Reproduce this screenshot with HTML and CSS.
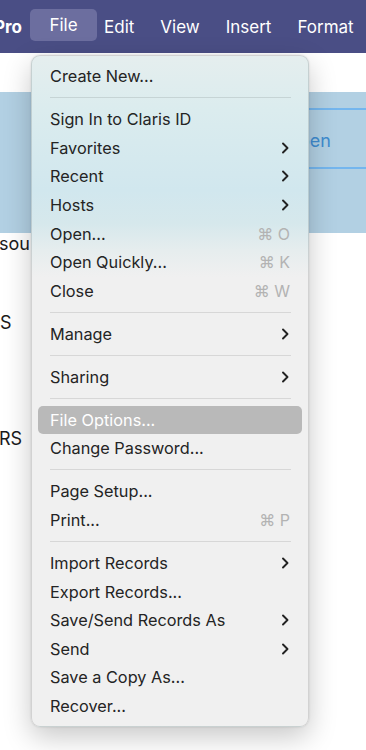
FILE: index.html
```html
<!DOCTYPE html>
<html>
<head>
<meta charset="utf-8">
<link rel="stylesheet" href="styles.css">
</head>
<body>
<div class="menubar">
  <span class="mb-item app"><span>Pro</span></span>
  <span class="mb-item active">File</span>
  <span class="mb-item edit">Edit</span>
  <span class="mb-item">View</span>
  <span class="mb-item">Insert</span>
  <span class="mb-item">Format</span>
</div>
<div class="page">
  <div class="strip"></div>
  <div class="band">
    <div class="field"><span class="btn-text">Open</span></div>
  </div>
  <div class="doc">
    <div class="doc-line l1">sou</div>
    <div class="doc-line l2">S</div>
    <div class="doc-line l3">RS</div>
  </div>
</div>

<div class="menu">
  <div class="item"><span>Create New...</span></div>
  <div class="sep"></div>
  <div class="item"><span>Sign In to Claris ID</span></div>
  <div class="item"><span>Favorites</span><svg class="chev" viewBox="0 0 8 12"><path d="M2 1.5 L6.5 6 L2 10.5"/></svg></div>
  <div class="item"><span>Recent</span><svg class="chev" viewBox="0 0 8 12"><path d="M2 1.5 L6.5 6 L2 10.5"/></svg></div>
  <div class="item"><span>Hosts</span><svg class="chev" viewBox="0 0 8 12"><path d="M2 1.5 L6.5 6 L2 10.5"/></svg></div>
  <div class="item"><span>Open...</span><span class="key">⌘ O</span></div>
  <div class="item"><span>Open Quickly...</span><span class="key">⌘ K</span></div>
  <div class="item"><span>Close</span><span class="key">⌘ W</span></div>
  <div class="sep"></div>
  <div class="item"><span>Manage</span><svg class="chev" viewBox="0 0 8 12"><path d="M2 1.5 L6.5 6 L2 10.5"/></svg></div>
  <div class="sep"></div>
  <div class="item"><span>Sharing</span><svg class="chev" viewBox="0 0 8 12"><path d="M2 1.5 L6.5 6 L2 10.5"/></svg></div>
  <div class="sep"></div>
  <div class="item selected"><span>File Options...</span></div>
  <div class="item"><span>Change Password...</span></div>
  <div class="sep"></div>
  <div class="item"><span>Page Setup...</span></div>
  <div class="item"><span>Print...</span><span class="key">⌘ P</span></div>
  <div class="sep"></div>
  <div class="item"><span>Import Records</span><svg class="chev" viewBox="0 0 8 12"><path d="M2 1.5 L6.5 6 L2 10.5"/></svg></div>
  <div class="item"><span>Export Records...</span></div>
  <div class="item"><span>Save/Send Records As</span><svg class="chev" viewBox="0 0 8 12"><path d="M2 1.5 L6.5 6 L2 10.5"/></svg></div>
  <div class="item"><span>Send</span><svg class="chev" viewBox="0 0 8 12"><path d="M2 1.5 L6.5 6 L2 10.5"/></svg></div>
  <div class="item"><span>Save a Copy As...</span></div>
  <div class="item"><span>Recover...</span></div>
</div>
</body>
</html>
```

FILE: styles.css
```css
* { box-sizing: border-box; }
html, body {
  margin: 0;
  padding: 0;
  width: 366px;
  height: 750px;
  overflow: hidden;
  background: #ffffff;
  font-family: Inter, "Liberation Sans", sans-serif;
}
.menubar {
  height: 53px;
  background: #4a4e85;
  display: flex;
  align-items: center;
  gap: 26px;
  color: #ffffff;
  font-size: 17px;
  white-space: nowrap;
}
.mb-item {
  line-height: 20px;
  flex: none;
}
.mb-item.app {
  width: 22px;
  display: flex;
  justify-content: flex-end;
  font-weight: 700;
  margin-right: -18px;
}
.mb-item.active {
  background: #6c6e9f;
  width: 67px;
  height: 32px;
  line-height: 32px;
  text-align: center;
  border-radius: 5px;
  margin-top: -3px;
}
.mb-item.edit {
  margin-left: -19px;
}
.page {
  display: flex;
  flex-direction: column;
}
.strip {
  height: 39px;
  background: #ffffff;
}
.band {
  height: 141px;
  background: #b2d0e3;
  display: flex;
  justify-content: flex-end;
  padding-top: 16px;
}
.field {
  width: 100px;
  height: 61px;
  border-top: 2px solid #74b6ee;
  border-bottom: 2px solid #74b6ee;
  display: flex;
  align-items: center;
  padding-left: 19px;
  padding-top: 3px;
}
.btn-text {
  color: #3f8cd0;
  font-size: 18px;
}
.doc {
  position: relative;
  color: #1a1a1a;
  font-size: 18px;
}
.doc-line {
  position: absolute;
  left: 0;
  white-space: nowrap;
}
.l1 { top: 0px; left: -1px; }
.l2 { top: 79px; }
.l3 { top: 195px; left: -1px; }
.menu {
  position: absolute;
  left: 31px;
  top: 55px;
  width: 278px;
  padding: 6px 0;
  border-radius: 9px;
  background: linear-gradient(180deg, #e5eeee 0%, #dbecee 8%, #d1e7ee 20%, #d6e8ec 25%, #e6edee 29%, #f0f0f0 33%, #f0f0f0 100%);
  border: 1px solid rgba(0, 0, 0, 0.12);
  box-shadow: 0 10px 28px rgba(0, 0, 0, 0.22), 0 0 2px rgba(0, 0, 0, 0.15);
  color: #242424;
  font-size: 16.3px;
}
.item {
  height: 28.6px;
  margin: 0 6px;
  padding: 0 12px 0 12px;
  border-radius: 5px;
  display: flex;
  align-items: center;
  justify-content: space-between;
  white-space: nowrap;
}
.item.selected {
  background: #b9b9b9;
  color: #ffffff;
}
.sep {
  height: 14.4px;
  margin: 0 17px 0 18px;
  display: flex;
  align-items: center;
}
.sep::before {
  content: "";
  display: block;
  width: 100%;
  height: 1px;
  background: rgba(0, 0, 0, 0.1);
}
.key {
  color: #b3b3b3;
  font-size: 16px;
}
.chev {
  width: 8px;
  height: 12px;
  margin-right: 1px;
  fill: none;
  stroke: #222222;
  stroke-width: 1.9;
  stroke-linecap: round;
  stroke-linejoin: round;
}
```
